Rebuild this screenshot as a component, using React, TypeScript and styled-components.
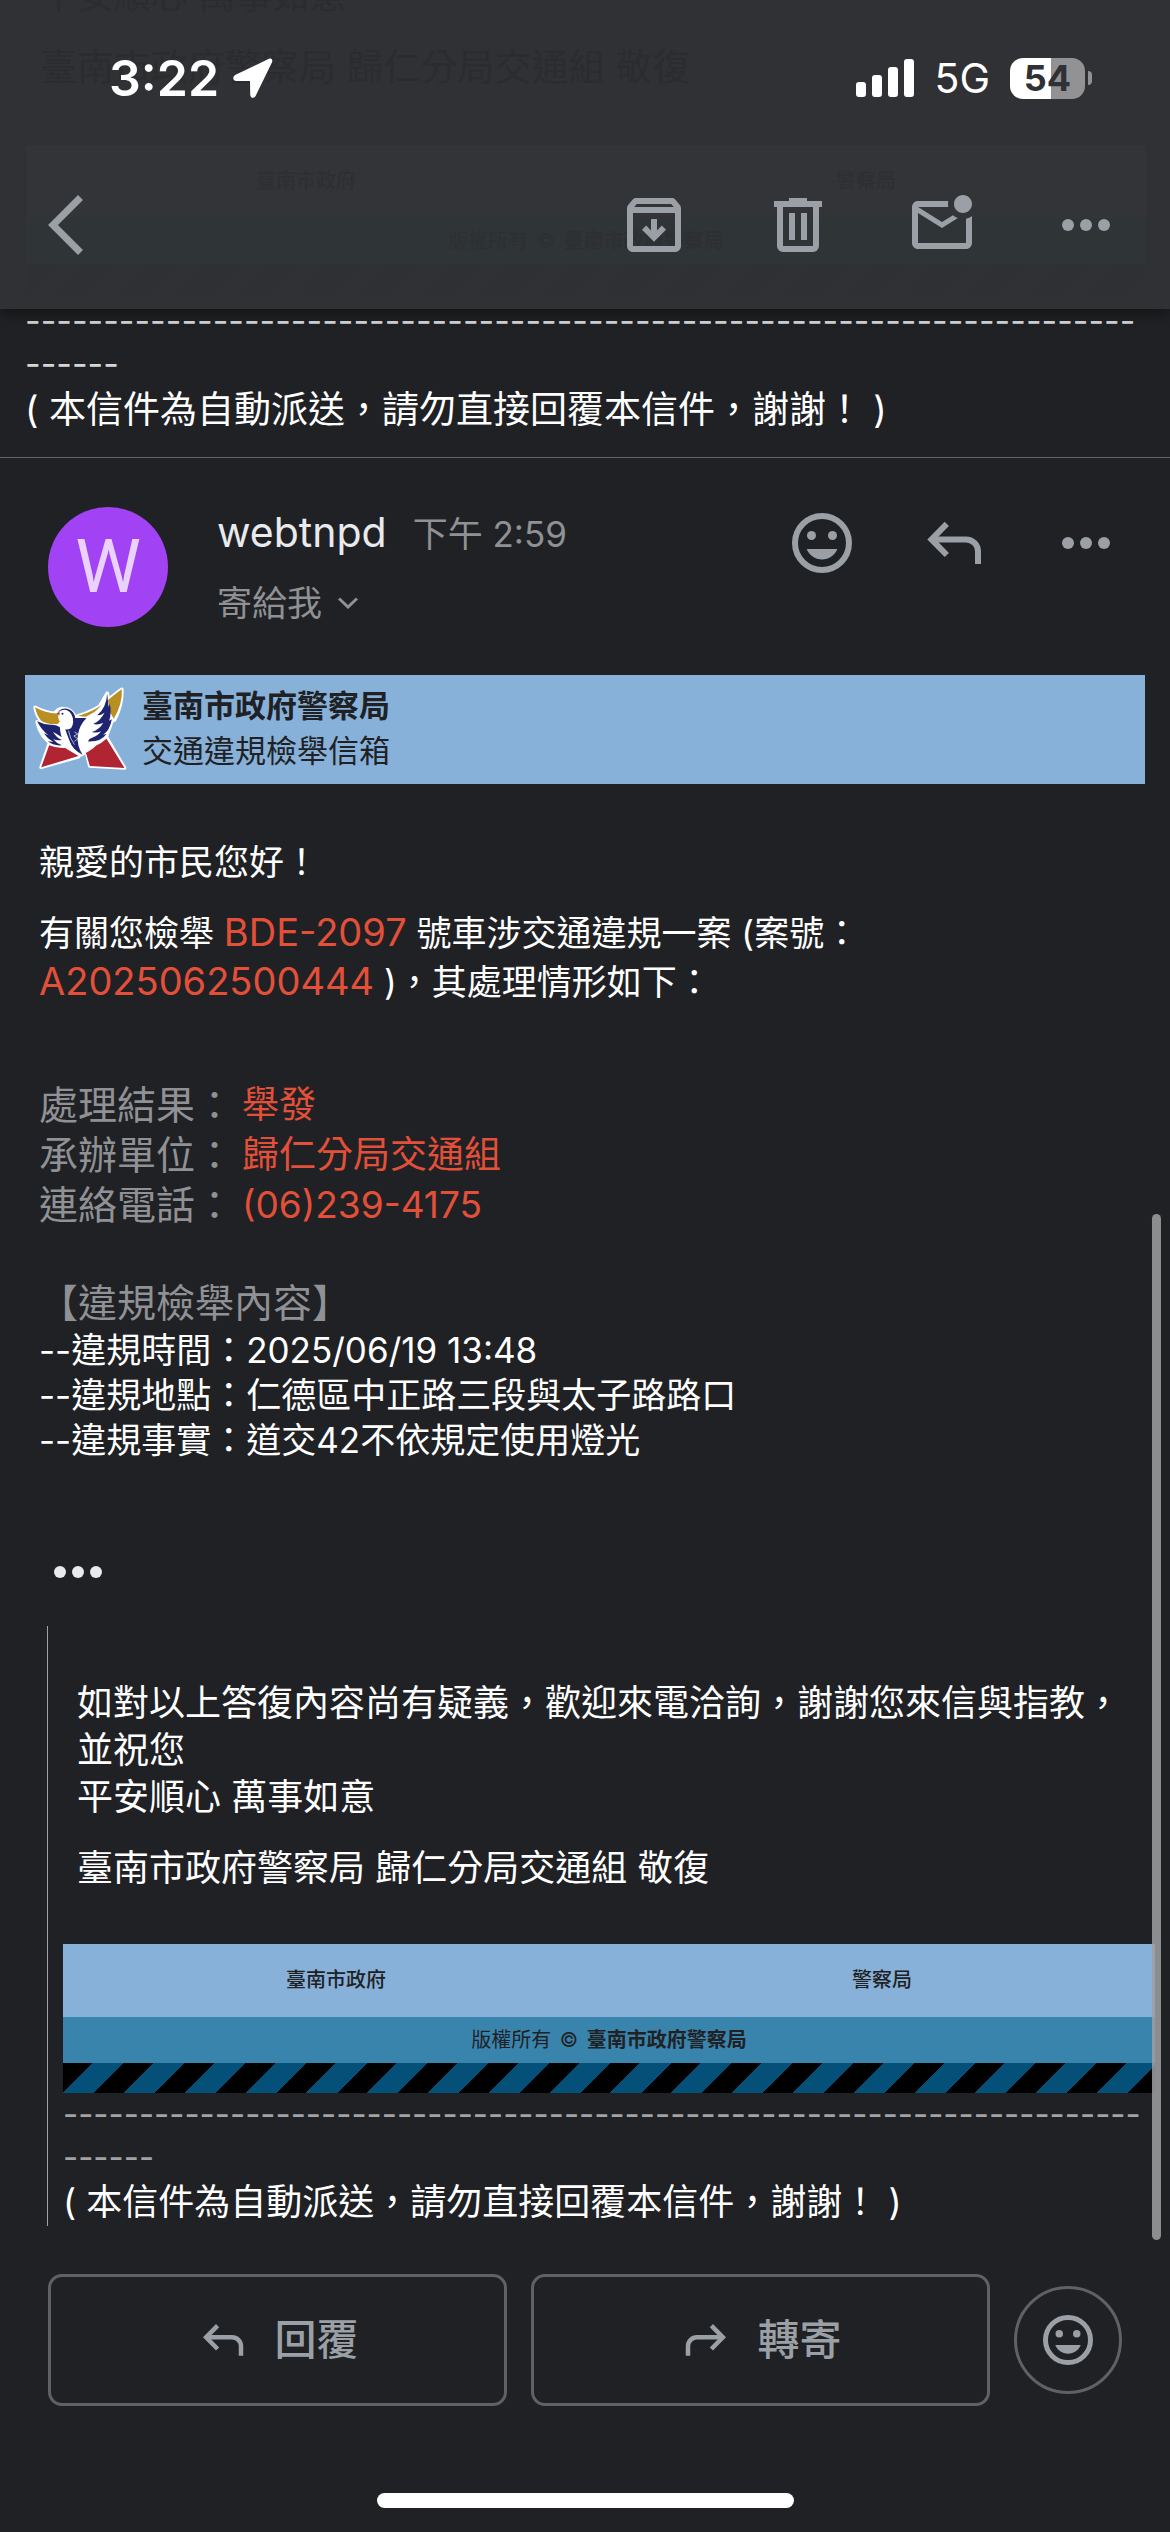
import React from "react";
import styled, { createGlobalStyle } from "styled-components";

const colors = {
  bg: "#202124",
  bar: "#303134",
  icon: "#9aa0a6",
  textPrimary: "#ffffff",
  textBright: "#e8eaed",
  textMuted: "#8f9195",
  border: "#5f6165",
  danger: "#e3503a",
  sky: "#87b1d9",
  sea: "#3984ad",
  avatar: "#a142f4",
};

const GlobalStyle = createGlobalStyle`
  * {
    box-sizing: border-box;
  }
  body {
    margin: 0;
    background: ${colors.bg};
    font-family: Inter, "Noto Sans CJK TC", sans-serif;
  }
  p, h1, h2 {
    margin: 0;
    font-weight: 400;
  }
  button {
    padding: 0;
    border: none;
    background: none;
    color: inherit;
    font-family: inherit;
  }
  svg {
    display: block;
  }
`;

const Page = styled.div`
  position: relative;
  display: flex;
  flex-direction: column;
  min-height: 100vh;
  overflow: hidden;
  background: ${colors.bg};
  color: ${colors.textPrimary};
`;

const Header = styled.header`
  position: relative;
  overflow: hidden;
  background: ${colors.bar};
`;

const HeaderShadow = styled.div`
  position: relative;
  z-index: 2;
  box-shadow: 0 4px 14px rgba(0, 0, 0, 0.45);
`;

/* what has scrolled away under the translucent header */
const Underlay = styled.div`
  position: absolute;
  inset: 0;
  padding: 0 24px 0 26px;
  color: #2b2c2f;
  font-size: 37px;
  line-height: 48px;

  p {
    padding-left: 14px;
  }
  p:first-child {
    margin: -28px 0 24px;
  }
  p + p {
    margin-bottom: 53px;
  }
`;

const StatusBar = styled.div`
  position: relative;
  display: flex;
  align-items: center;
  justify-content: space-between;
  height: 156px;
  padding: 0 78px 0 109px;
`;

const Clock = styled.div`
  display: flex;
  align-items: center;
  gap: 14px;
  font-size: 50px;
  font-weight: 600;
  line-height: 60px;
`;

const Signals = styled.div`
  display: flex;
  align-items: center;
  gap: 20px;
  font-size: 41px;
  line-height: 48px;
`;

const Battery = styled.div`
  display: flex;
  align-items: center;
  gap: 3px;

  span {
    width: 75px;
    height: 41px;
    border-radius: 13px;
    background: linear-gradient(90deg, #fff 55%, #929295 55%);
    color: ${colors.bar};
    font-size: 36px;
    font-weight: 700;
    line-height: 41px;
    text-align: center;
  }
  i {
    width: 4px;
    height: 14px;
    border-radius: 0 8px 8px 0;
    background: #929295;
  }
`;

const Toolbar = styled.nav`
  position: relative;
  display: flex;
  align-items: center;
  gap: 72px;
  padding: 33px 48px 48px;
  color: ${colors.icon};
`;

const BackButton = styled.button`
  margin-right: auto;
`;

const PreviousTail = styled.section`
  margin-top: -10px;
  padding: 0 25px 22px;
  border-bottom: 1px solid ${colors.border};
`;

const Dashes = styled.p<{ $muted?: boolean }>`
  color: ${({ $muted }) => ($muted ? "#a3a3a7" : "#d6d6d9")};
  font-size: ${({ $muted }) => ($muted ? 33 : 34)}px;
  line-height: 43px;
  overflow-wrap: anywhere;
`;

const AutoNote = styled.p<{ $large?: boolean }>`
  font-size: ${({ $large }) => ($large ? 37 : 36)}px;
  line-height: ${({ $large }) => ($large ? 50 : 47)}px;
`;

const SenderRow = styled.div`
  display: flex;
  align-items: flex-start;
  padding: 49px 48px 48px;
`;

const Avatar = styled.div`
  flex: none;
  width: 120px;
  height: 120px;
  margin-right: 49px;
  border-radius: 50%;
  background: ${colors.avatar};
  color: #e9d2fd;
  font-family: Roboto, sans-serif;
  font-size: 74px;
  line-height: 120px;
  text-align: center;
`;

const SenderInfo = styled.div`
  flex: 1;
  color: ${colors.textMuted};
  font-size: 35px;
`;

const SenderName = styled.div`
  display: flex;
  align-items: baseline;
  gap: 26px;
  line-height: 50px;

  strong {
    color: ${colors.textBright};
    font-size: 41px;
    font-weight: 400;
  }
`;

const Recipient = styled.button`
  display: flex;
  align-items: center;
  gap: 16px;
  margin-top: 24px;
  font-size: 35px;
  line-height: 40px;
`;

const SenderActions = styled.div`
  display: flex;
  gap: 60px;
  color: ${colors.icon};
`;

const Letterhead = styled.div`
  display: flex;
  align-items: center;
  gap: 14px;
  height: 109px;
  margin: 0 25px;
  padding: 0 0 3px 6px;
  background: ${colors.sky};
  color: ${colors.bg};
  font-size: 31px;
  line-height: 45px;

  h1 {
    font-size: 31px;
    font-weight: 700;
  }
`;

const Body = styled.div`
  padding: 54px 39px 0;
  font-size: 35px;
  line-height: 48px;

  p + p {
    margin-top: 22px;
  }
`;

const Highlight = styled.span`
  color: ${colors.danger};
  font-size: 38px;
`;

const ResultList = styled.dl`
  display: grid;
  grid-template-columns: auto 1fr;
  column-gap: 8px;
  margin: 74px 0 48px;
  line-height: 50px;

  dt {
    color: ${colors.textMuted};
    font-size: 39px;
  }
  dd {
    margin: 0;
    color: ${colors.danger};
    font-size: 37px;
  }
`;

const Details = styled.div`
  line-height: 45px;

  h2 {
    color: ${colors.textMuted};
    font-size: 39px;
    line-height: 50px;
  }
  p + p {
    margin-top: 0;
  }
`;

const QuoteToggle = styled.button`
  align-self: flex-start;
  margin: 73px 0 18px 42px;
  color: ${colors.textBright};
`;

const Quote = styled.blockquote`
  margin: 0 15px 0 47px;
  padding: 54px 0 0 15px;
  border-left: 1px solid #a0a1a4;
`;

const QuoteText = styled.div`
  padding: 0 15px 52px 14px;
  font-size: 36px;
  line-height: 47px;

  p + p {
    margin-top: 24px;
  }
`;

const Banner = styled.div<{ $ghost?: boolean }>`
  color: ${({ $ghost }) => ($ghost ? "#2e2f32" : colors.bg)};
  font-size: 20px;
  font-weight: 500;
  text-align: center;
`;

const BannerOffices = styled.div<{ $ghost?: boolean }>`
  display: grid;
  grid-template-columns: 1fr 1fr;
  line-height: 73px;
  background: ${({ $ghost }) => ($ghost ? "#333437" : colors.sky)};
`;

const BannerRights = styled.div<{ $ghost?: boolean }>`
  font-weight: 400;
  line-height: 46px;
  background: ${({ $ghost }) => ($ghost ? "#2f3437" : colors.sea)};

  span {
    padding: 0 3px;
  }
  b {
    font-weight: 600;
  }
`;

const BannerStripes = styled.div<{ $ghost?: boolean }>`
  height: 30px;
  background: ${({ $ghost }) =>
    $ghost
      ? "repeating-linear-gradient(135deg, #2f3033 0 21px, #303134 21px 43px)"
      : "repeating-linear-gradient(135deg, #000 0 21px, #055078 21px 43px)"};
`;

const ReplyBar = styled.div`
  display: flex;
  align-items: center;
  gap: 24px;
  margin-bottom: 87px;
  padding: 48px 48px 0;
  color: ${colors.icon};
`;

const ReplyButton = styled.button`
  display: flex;
  flex: 1;
  align-items: center;
  justify-content: center;
  gap: 24px;
  height: 132px;
  border: 3px solid ${colors.border};
  border-radius: 14px;
  font-size: 42px;
  font-weight: 500;
  line-height: 48px;
`;

const ReactButton = styled.button`
  display: grid;
  flex: none;
  place-items: center;
  width: 108px;
  height: 108px;
  border: 3px solid ${colors.border};
  border-radius: 50%;
`;

const HomeIndicator = styled.div`
  align-self: center;
  width: 417px;
  height: 15px;
  margin: auto 0 24px;
  border-radius: 8px;
  background: #fff;
`;

const ScrollThumb = styled.div`
  position: absolute;
  top: 1214px;
  right: 9px;
  z-index: 1;
  width: 9px;
  height: 1026px;
  border-radius: 5px;
  background: rgba(160, 160, 162, 0.85);
`;

interface IIcon {
  size?: number;
  children: React.ReactNode;
}

const Icon: React.FC<IIcon> = ({ size = 72, children }) => (
  <svg width={size} height={size} viewBox="0 0 24 24" fill="currentColor" aria-hidden="true">
    {children}
  </svg>
);

const MoreIcon = () => (
  <Icon>
    <circle cx="6" cy="12" r="2" />
    <circle cx="12" cy="12" r="2" />
    <circle cx="18" cy="12" r="2" />
  </Icon>
);

const SmileIcon: React.FC<{ size?: number }> = ({ size }) => (
  <Icon size={size}>
    <circle cx="12" cy="12" r="9" fill="none" stroke="currentColor" strokeWidth="2" />
    <circle cx="8.5" cy="9.5" r="1.5" />
    <circle cx="15.5" cy="9.5" r="1.5" />
    <path d="M12 17.5c2.33 0 4.31-1.46 5.11-3.5H6.89c.8 2.04 2.78 3.5 5.11 3.5z" />
  </Icon>
);

const ArrowIcon: React.FC<{ size?: number; forward?: boolean }> = ({ size, forward }) => (
  <Icon size={size}>
    <g
      fill="none"
      stroke="currentColor"
      strokeWidth="2"
      transform={forward ? "translate(24 0) scale(-1 1)" : undefined}
    >
      <path d="M9.6 5.6 4.5 10.8l5.1 5.2" />
      <path d="M4.6 10.8H16a4 4 0 0 1 4 4V19" />
    </g>
  </Icon>
);

const ArchiveIcon = () => (
  <Icon>
    <path d="M20.54 5.23l-1.39-1.68C18.88 3.21 18.47 3 18 3H6c-.47 0-.88.21-1.16.55L3.46 5.23C3.17 5.57 3 6.02 3 6.5V19c0 1.1.9 2 2 2h14c1.1 0 2-.9 2-2V6.5c0-.48-.17-.93-.46-1.27zM6.24 5h11.52l.83 1H5.42l.82-1zM5 19V8h14v11H5z" />
    <path d="M11 10v3.8l-1.6-1.6L8 13.6l4 4 4-4-1.4-1.4-1.6 1.6V10z" />
  </Icon>
);

const TrashIcon = () => (
  <Icon>
    <path d="M7 21q-.825 0-1.412-.587T5 19V6H4V4h5V3h6v1h5v2h-1v13q0 .825-.587 1.413T17 21zM17 6H7v13h10zM9 17h2V8H9zm4 0h2V8h-2z" />
  </Icon>
);

const UnreadIcon = () => (
  <Icon>
    <path d="M22 8.98V18c0 1.1-.9 2-2 2H4c-1.1 0-2-.9-2-2V6c0-1.1.9-2 2-2h10.1c-.06.32-.1.66-.1 1 0 .34.04.68.1 1H4l8 5 3.67-2.29c.47.43 1.02.76 1.63.98L12 13 4 8v10h16V9.9c.74-.15 1.42-.48 2-.92zM16 5c0 1.66 1.34 3 3 3s3-1.34 3-3-1.34-3-3-3-3 1.34-3 3z" />
  </Icon>
);

const DoveLogo = () => (
  <svg width="97" height="84" viewBox="20 18 290 252" role="img" aria-label="臺南市政府警察局">
    {/* white rim under every shape */}
    <g fill="#fff" stroke="#fff" strokeWidth="11" strokeLinejoin="round">
      <path d="M32 82q34 20 72 18l-4 32q-32 2-50-10-14-16-18-40z" />
      <path d="M160 108q50-14 84-42 28-24 48-38 2 46-22 92l-60 10z" />
      <path d="M74 192 50 262l112-32 20-28 14 56 104 6-54-92z" />
      <path d="M38 126q10 48 50 70l34 8q24 18 50 20l40-34 34-22 18-50-16-78-30 52-66 20q-10-26-38-26-20 2-24 20l12 26-14 12z" />
    </g>
    <path fill="#b98f22" d="M32 82q34 20 72 18-6 14 2 24l-6 8q-32 2-50-10-14-16-18-40z" />
    <path fill="#b98f22" d="M160 108q50-14 84-42 28-24 48-38 2 46-24 88l-12-20-10-34-36 34-26 14z" />
    <path fill="#b02531" d="M74 196q24 10 48 8l40 24-112 34z" />
    <path fill="#b02531" d="M180 204l16 54 104 6-54-88q-28 26-66 28z" />
    <path
      fill="#fff"
      d="M40 126q24 16 60 14l22 16 50 68q40-16 66-54l22-50-12-76q-12 40-52 66l-46 30-2-32q-6-18-22-18-22 2-24 18l12 24-14 14z"
    />
    {/* left wing feathers */}
    <path
      fill="#1e2470"
      d="M38 124q24 12 46 10 14 0 22 8 2 22 6 30-14-10-26-16 8 16 26 24-14 2-26-2 10 12 26 18-26 2-42-12l16 2q-18-10-28-26l14 6q-20-14-34-42z"
    />
    {/* neck and chest */}
    <path
      fill="#1e2470"
      d="M100 98q8-14 28-12 22 6 24 28 16 0 34 0-22 22-26 52-4 30 14 58-30-14-40-44l-12-32q22 4 24-22 0-28-20-36-14-4-26 8z"
    />
    <path fill="none" stroke="#fff" strokeWidth="2" d="M132 152q4 24 18 42M150 156l10 6-12 6 12 8-10 8" />
    <path fill="#b02531" d="M96 100l9-4v9z" />
    <circle cx="114" cy="101" r="3" fill="#1e2470" />
    {/* right wing feathers */}
    <path
      fill="#1e2470"
      d="M248 40q-2 44-30 66 12 0 22-8-12 24-34 34 16 4 30-4-10 20-34 28 14 4 28-2-12 16-34 22l-6 8q40 2 56-22l-10 2q20-12 26-46l-8 4q8-24 2-50l-4 8z"
    />
  </svg>
);

const FooterBanner: React.FC<{ ghost?: boolean }> = ({ ghost }) => (
  <Banner $ghost={ghost}>
    <BannerOffices $ghost={ghost}>
      <div>臺南市政府</div>
      <div>警察局</div>
    </BannerOffices>
    <BannerRights $ghost={ghost}>
      版權所有 <span>©</span> <b>臺南市政府警察局</b>
    </BannerRights>
    <BannerStripes $ghost={ghost} />
  </Banner>
);

const results = [
  { label: "處理結果：", value: "舉發" },
  { label: "承辦單位：", value: "歸仁分局交通組" },
  { label: "連絡電話：", value: "(06)239-4175" },
];

const details = [
  "--違規時間：2025/06/19 13:48",
  "--違規地點：仁德區中正路三段與太子路路口",
  "--違規事實：道交42不依規定使用燈光",
];

const RULE = "-".repeat(77);
const AUTO_NOTE = "( 本信件為自動派送，請勿直接回覆本信件，謝謝！ )";

export default function App() {
  return (
    <Page>
      <GlobalStyle />
      <HeaderShadow>
        <Header>
          <Underlay aria-hidden="true">
            <p>平安順心 萬事如意</p>
            <p>臺南市政府警察局 歸仁分局交通組 敬復</p>
            <FooterBanner ghost />
          </Underlay>
          <StatusBar>
            <Clock>
              3:22
              <svg width="40" height="40" viewBox="0 0 40 40" fill="#fff" aria-hidden="true">
                <path d="M35.5 1 2.6 16.8C-.8 18.6-.4 22.8 3.4 22.9L17 23.1l.2 13.4c.1 3.9 3.9 4.5 5.5 1.2L38.9 4.5C40.2 1.6 38.3-.2 35.5 1z" />
              </svg>
            </Clock>
            <Signals>
              <svg width="58" height="38" viewBox="0 0 58 38" fill="#fff" aria-hidden="true">
                <rect x="0" y="23" width="10" height="15" rx="3" />
                <rect x="16" y="16" width="10" height="22" rx="3" />
                <rect x="32" y="8" width="10" height="30" rx="3" />
                <rect x="48" y="0" width="10" height="38" rx="3" />
              </svg>
              5G
              <Battery>
                <span>54</span>
                <i />
              </Battery>
            </Signals>
          </StatusBar>
          <Toolbar>
            <BackButton aria-label="返回">
              <svg
                width="36"
                height="60"
                viewBox="0 0 36 60"
                fill="none"
                stroke="currentColor"
                strokeWidth="7"
                aria-hidden="true"
              >
                <path d="M32.5 2.5 5 30l27.5 27.5" />
              </svg>
            </BackButton>
            <button aria-label="封存">
              <ArchiveIcon />
            </button>
            <button aria-label="刪除">
              <TrashIcon />
            </button>
            <button aria-label="標示為未讀">
              <UnreadIcon />
            </button>
            <button aria-label="更多">
              <MoreIcon />
            </button>
          </Toolbar>
        </Header>
      </HeaderShadow>

      <PreviousTail>
        <Dashes>{RULE}</Dashes>
        <AutoNote $large>{AUTO_NOTE}</AutoNote>
      </PreviousTail>

      <SenderRow>
        <Avatar>W</Avatar>
        <SenderInfo>
          <SenderName>
            <strong>webtnpd</strong>
            <span>下午 2:59</span>
          </SenderName>
          <Recipient>
            寄給我
            <svg
              width="20"
              height="12"
              viewBox="0 0 20 12"
              fill="none"
              stroke="currentColor"
              strokeWidth="3"
              aria-hidden="true"
            >
              <path d="M1 1.5l9 8.5 9-8.5" />
            </svg>
          </Recipient>
        </SenderInfo>
        <SenderActions>
          <button aria-label="新增表情符號回應">
            <SmileIcon />
          </button>
          <button aria-label="回覆">
            <ArrowIcon />
          </button>
          <button aria-label="更多選項">
            <MoreIcon />
          </button>
        </SenderActions>
      </SenderRow>

      <Letterhead>
        <DoveLogo />
        <div>
          <h1>臺南市政府警察局</h1>
          <p>交通違規檢舉信箱</p>
        </div>
      </Letterhead>

      <Body>
        <p>親愛的市民您好！</p>
        <p>
          有關您檢舉 <Highlight>BDE-2097</Highlight> 號車涉交通違規一案 (案號：{" "}
          <Highlight>A2025062500444</Highlight> )，其處理情形如下：
        </p>
        <ResultList>
          {results.map(({ label, value }) => (
            <React.Fragment key={label}>
              <dt>{label}</dt>
              <dd>{value}</dd>
            </React.Fragment>
          ))}
        </ResultList>
        <Details>
          <h2>【違規檢舉內容】</h2>
          {details.map((line) => (
            <p key={line}>{line}</p>
          ))}
        </Details>
      </Body>

      <QuoteToggle aria-label="顯示引用文字">
        <MoreIcon />
      </QuoteToggle>

      <Quote>
        <QuoteText>
          <p>
            如對以上答復內容尚有疑義，歡迎來電洽詢，謝謝您來信與指教，並祝您
            <br />
            平安順心 萬事如意
          </p>
          <p>臺南市政府警察局 歸仁分局交通組 敬復</p>
        </QuoteText>
        <FooterBanner />
        <Dashes $muted>{RULE}</Dashes>
        <AutoNote>{AUTO_NOTE}</AutoNote>
      </Quote>

      <ReplyBar>
        <ReplyButton>
          <ArrowIcon size={54} />
          回覆
        </ReplyButton>
        <ReplyButton>
          <ArrowIcon size={54} forward />
          轉寄
        </ReplyButton>
        <ReactButton aria-label="表情符號回應">
          <SmileIcon size={60} />
        </ReactButton>
      </ReplyBar>

      <HomeIndicator />
      <ScrollThumb />
    </Page>
  );
}
